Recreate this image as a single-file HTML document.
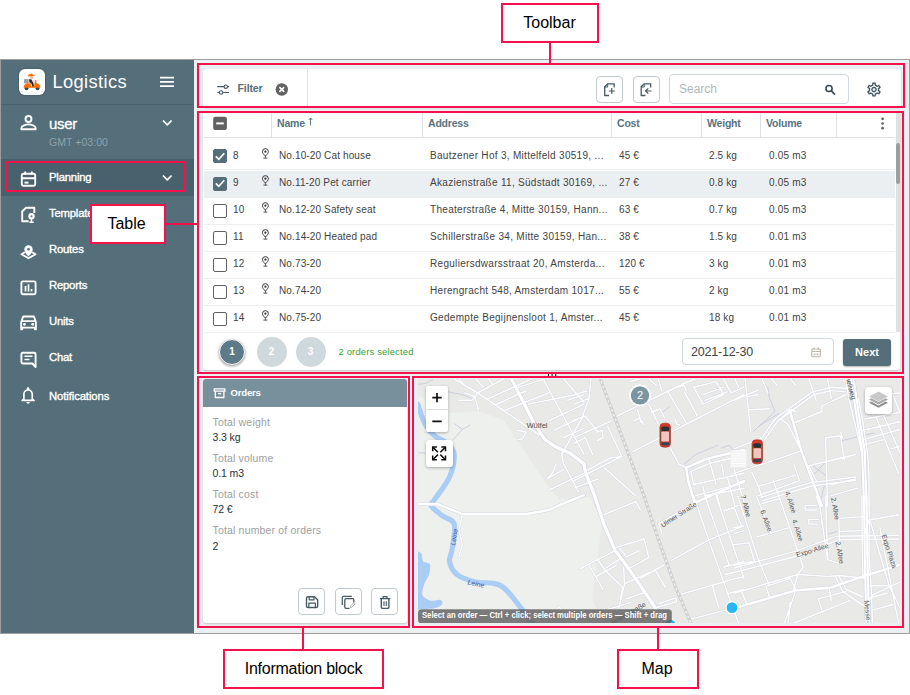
<!DOCTYPE html>
<html><head><meta charset="utf-8">
<style>
*{box-sizing:border-box;margin:0;padding:0}
html,body{width:910px;height:695px;background:#fff;overflow:hidden}
body{position:relative;font-family:"Liberation Sans",sans-serif;color:#263238}
.abs{position:absolute}
#app{position:absolute;left:0;top:59px;width:910px;height:575px;background:#eceff1;border:1px solid #9e9e9e;overflow:hidden}
#side{position:absolute;left:1px;top:60px;width:193px;height:573px;background:#546e7a}
.red{position:absolute;border:2px solid #f4114c;pointer-events:none}
.call{position:absolute;border:2px solid #f4114c;background:#fff;font-size:16px;color:#000;text-align:center}
.line{position:absolute;background:#f4114c}
.nav{position:absolute;left:49px;color:#fff;font-size:11.3px;letter-spacing:-0.2px;-webkit-text-stroke:0.35px #fff;margin-top:0}
.card{position:absolute;background:#fff;border-radius:3px;box-shadow:0 1px 2px rgba(0,0,0,.18)}
.th{position:absolute;top:116.500px;font-size:10.5px;font-weight:bold;color:#587380;letter-spacing:-0.2px}
.sep{position:absolute;top:113px;width:1px;height:24px;background:#e0e0e0}
.row{position:absolute;left:204px;width:691px;height:27px;border-bottom:1px solid #eceff1;font-size:10px;color:#424242;letter-spacing:0.13px}
.row span{position:absolute;top:6.500px;white-space:nowrap}
.cb{position:absolute;left:9px;top:6px;width:14px;height:14px;border:1.5px solid #616161;border-radius:2px;background:#fff}
.pin{position:absolute;left:57.200px;top:4.500px}
.cb.on{background:#546e7a;border-color:#546e7a}
.lbl{position:absolute;left:212.500px;font-size:10.5px;color:#9e9e9e;letter-spacing:0.17px;margin-top:-0.500px}
.val{position:absolute;left:212.500px;font-size:10.5px;color:#263238;letter-spacing:-0.1px}
.btn{position:absolute;width:27px;height:27px;border:1px solid #c0cacf;border-radius:4px;background:#fff}
</style></head><body>

<div id="app"></div>
<div id="side"></div>

<!-- SIDEBAR -->
<div class="abs" style="left:1px;top:104px;width:193px;height:1px;background:#4b636e"></div>
<div class="abs" style="left:19px;top:69px;width:26px;height:26px;border-radius:6px;background:#fff;box-shadow:0 0 2px rgba(0,0,0,.35)"></div>
<svg class="abs" style="left:15px;top:65px" width="35" height="35" viewBox="15 65 35 35">
<circle cx="26.500" cy="88.300" r="1.900" fill="#37474f"/><circle cx="37.600" cy="88.300" r="1.900" fill="#37474f"/>
<path d="M23.600 87.800c0-2.600 1.800-4.600 4.600-4.600h2.600v3h3.300l1-6.200 1.200.3.300 3c2.200.4 3.800 2.200 3.800 4.500z" fill="#ff6d00"/>
<rect x="24.100" y="79.100" width="4.600" height="4.300" fill="#9e9e9e"/>
<path d="M29 79.200h2.300l2.300 4 .3 3.200h-1.800l-.5-2.600-2.300-1.500z" fill="#263238"/>
<path d="M32.300 80.300l3.200.4v.9l-3.200-.2z" fill="#f8bbd0"/>
<circle cx="31.700" cy="77.500" r="1.500" fill="#f6b6a8"/>
<path d="M28 76.300c0-1.600 1.300-2.500 2.800-2.500 1.300 0 2.300.6 2.700 1.400l1.400.2-.3.700-6.400.5z" fill="#ff6d00"/>
</svg>
<div class="abs" style="left:52.400px;top:71px;font-size:18.3px;color:#fff;letter-spacing:0.4px">Logistics</div>
<div class="abs" style="left:49px;top:114.500px;font-size:15px;color:#fff;letter-spacing:-0.35px;-webkit-text-stroke:0.3px #fff">user</div>
<div class="abs" style="left:49px;top:136px;font-size:10.5px;color:#8fa3ad;letter-spacing:0.05px">GMT +03:00</div>
<div class="abs" style="left:1px;top:159px;width:193px;height:37px;background:#49616d"></div>
<div class="nav" style="top:171px">Planning</div>
<div class="nav" style="top:207px">Templates</div>
<div class="nav" style="top:243px">Routes</div>
<div class="nav" style="top:279px">Reports</div>
<div class="nav" style="top:315px">Units</div>
<div class="nav" style="top:351px">Chat</div>
<div class="nav" style="top:390px;letter-spacing:-0.1px">Notifications</div>

<!-- SIDEBAR ICONS -->
<svg class="abs" style="left:0;top:0" width="200" height="695" viewBox="0 0 200 695" fill="none" stroke="#fff" stroke-width="1.9" stroke-linejoin="round">
<!-- hamburger -->
<path d="M160 77.700h14M160 81.900h14M160 86.100h14" stroke-width="1.800"/>
<!-- chevrons -->
<path d="M163 120.5l4.3 4.3 4.3-4.3M163 175.5l4.3 4.3 4.3-4.3" stroke-width="1.7"/>
<!-- user -->
<circle cx="28.5" cy="119" r="3"/>
<path d="M21.4 129.2v-1.3c0-2.300 4.600-3.500 7.100-3.500s7.100 1.200 7.100 3.500v1.300z"/>
<!-- planning calendar -->
<rect x="21.8" y="173.800" width="13.400" height="12" rx="1.800"/>
<path d="M25.200 171.500v3M31.800 171.500v3M22 178.200h13" />
<path d="M24.500 182.600h4" stroke-width="2"/>
<!-- templates -->
<path d="M34.300 213v-5.300h-8.300l-3.800 3.800v9.700h6.500"/>
<circle cx="31.500" cy="216.300" r="2.600" fill="#fff" stroke-width="1.2"/><circle cx="31.500" cy="216.300" r="1" fill="#546e7a" stroke="none"/>
<path d="M31.500 218.600v3M29.300 222.200h4.400" stroke-width="1.500"/>
<!-- routes -->
<path d="M28.500 255.500c-2.400-2.500-3.600-4.400-3.600-6.100a3.600 3.600 0 0 1 7.200 0c0 1.700-1.200 3.600-3.600 6.100z" fill="#fff" stroke-width="1.2"/>
<circle cx="28.500" cy="249.200" r="1.300" fill="#546e7a" stroke="none"/>
<path d="M24.800 252.300l-3.300 1.900 7 4.100 7-4.100-3.300-1.900"/>
<!-- reports -->
<rect x="21.400" y="281.400" width="14.200" height="12.900" rx="1.500"/>
<path d="M25.500 286v5.500M28.500 284.200v7.300M31.500 289v2.500" stroke-width="1.700"/>
<!-- units car -->
<g transform="translate(17.500 311) scale(0.92)" stroke="none" fill="#fff">
<path d="M18.920 6.010C18.720 5.420 18.160 5 17.500 5h-11c-.66 0-1.210.42-1.420 1.010L3 12v8c0 .55.450 1 1 1h1c.55 0 1-.45 1-1v-1h12v1c0 .55.450 1 1 1h1c.55 0 1-.45 1-1v-8l-2.080-5.990zM6.850 7h10.290l1.080 3.110H5.770L6.850 7zM19 17H5v-5h14v5z"/>
<circle cx="7.500" cy="14.500" r="1.500"/><circle cx="16.500" cy="14.500" r="1.500"/>
</g>
<!-- chat -->
<path d="M35.600 367v-12.800a1.500 1.500 0 0 0-1.500-1.500h-11.200a1.500 1.500 0 0 0-1.500 1.500v7.800a1.500 1.500 0 0 0 1.500 1.500h9.500z"/>
<path d="M24.500 356.300h8M24.500 359.400h5" stroke-width="1.500"/>
<!-- bell -->
<g transform="translate(18 385.200) scale(0.84)" stroke="none" fill="#fff">
<path d="M12 22c1.100 0 2-.9 2-2h-4c0 1.100.9 2 2 2zm6-6v-5c0-3.070-1.630-5.640-4.500-6.320V4c0-.83-.67-1.500-1.500-1.500s-1.500.67-1.500 1.500v.68C7.640 5.360 6 7.920 6 11v5l-2 2v1h16v-1l-2-2zm-2 1H8v-6c0-2.480 1.510-4.500 4-4.500s4 2.020 4 4.500v6z"/>
</g>
</svg>

<!-- TOOLBAR -->
<div class="card" style="left:203px;top:69px;width:698px;height:38px"></div>
<div class="abs" style="left:307px;top:69px;width:1px;height:38px;background:#e0e0e0"></div>
<div class="abs" style="left:237.500px;top:82px;font-size:10.5px;font-weight:bold;color:#546e7a;letter-spacing:-0.1px">Filter</div>
<div class="btn" style="left:596px;top:76px"></div>
<div class="btn" style="left:633px;top:76px"></div>
<div class="abs" style="left:669px;top:74px;width:180px;height:30px;border:1px solid #cfd8dc;border-radius:4px;background:#fff"></div>
<div class="abs" style="left:679px;top:82px;font-size:12px;color:#b0b8bc">Search</div>

<!-- TOOLBAR ICONS -->
<svg class="abs" style="left:200px;top:60px;z-index:5" width="710" height="320" viewBox="200 60 710 320" fill="none" stroke="#455a64" stroke-width="1.300" stroke-linejoin="round">
<!-- filter -->
<path d="M217.300 86.700h6.700M227.700 86.700h1.300M217.300 92.500h1.800M223 92.500h6" stroke-width="1.200"/>
<circle cx="225.800" cy="86.700" r="1.700" stroke-width="1.100"/><circle cx="221.100" cy="92.500" r="1.700" stroke-width="1.100"/>
<!-- close -->
<circle cx="281.800" cy="89.500" r="6.200" fill="#616161" stroke="none"/>
<path d="M279.400 87.100l4.800 4.800M284.200 87.100l-4.800 4.800" stroke="#fff" stroke-width="1.700"/>
<!-- file plus -->
<path d="M614.200 87.500v-3.600h-6.700l-2.800 2.800v8.800h4.300" />
<path d="M607.700 84v3h-3" stroke-width="1"/>
<path d="M611.800 88v6M608.800 91h6" stroke-width="1.200"/>
<!-- file arrow -->
<path d="M650.700 87.500v-3.600h-6.700l-2.800 2.800v8.800h4.300" />
<path d="M644.200 84v3h-3" stroke-width="1"/>
<path d="M651.500 91h-5.800M648.300 88.300l-2.700 2.700 2.700 2.700" stroke-width="1.200"/>
<!-- search -->
<circle cx="829" cy="88.500" r="3.100" stroke="#37474f" stroke-width="1.500"/>
<path d="M831.300 90.900l3.700 3.700" stroke="#37474f" stroke-width="1.600"/>
<!-- gear -->
<g transform="translate(865.600 81.200) scale(0.7)" stroke="none" fill="#455a64"><path d="M19.430 12.980c.04-.32.070-.64.070-.98 0-.34-.03-.66-.07-.98l2.110-1.650c.19-.15.240-.42.120-.64l-2-3.460c-.09-.16-.26-.25-.44-.25-.06 0-.12.010-.17.030l-2.490 1c-.52-.4-1.080-.73-1.690-.98l-.38-2.650C14.460 2.180 14.250 2 14 2h-4c-.25 0-.46.180-.49.420l-.38 2.650c-.61.250-1.170.59-1.690.98l-2.490-1c-.06-.02-.12-.03-.18-.03-.17 0-.34.090-.43.250l-2 3.460c-.13.220-.07.490.12.640l2.110 1.650c-.04.320-.07.650-.07.980 0 .33.030.66.070.98l-2.110 1.650c-.19.150-.24.420-.12.640l2 3.460c.09.160.26.250.44.250.06 0 .12-.01.170-.03l2.490-1c.52.400 1.080.73 1.690.98l.38 2.650c.03.240.24.420.49.420h4c.25 0 .46-.18.490-.42l.38-2.650c.61-.25 1.170-.59 1.690-.98l2.490 1c.06.020.12.030.18.030.17 0 .34-.09.430-.25l2-3.460c.12-.22.070-.49-.12-.64l-2.110-1.650zm-1.980-1.710c.04.310.05.520.05.730 0 .21-.02.430-.05.730l-.14 1.130.89.700 1.080.84-.7 1.210-1.270-.51-1.040-.42-.9.680c-.43.320-.84.560-1.250.73l-1.060.43-.16 1.130-.2 1.350h-1.400l-.19-1.350-.16-1.130-1.060-.43c-.43-.18-.83-.41-1.230-.71l-.91-.7-1.060.43-1.270.51-.7-1.210 1.080-.84.890-.7-.14-1.130c-.03-.31-.05-.54-.05-.74s.02-.43.050-.73l.14-1.130-.89-.7-1.080-.84.700-1.210 1.270.51 1.040.42.900-.68c.43-.32.840-.56 1.250-.73l1.060-.43.160-1.130.2-1.350h1.390l.19 1.350.16 1.130 1.060.43c.43.180.83.410 1.230.71l.91.700 1.060-.43 1.270-.51.700 1.210-1.070.85-.89.700.14 1.130zM12 8c-2.210 0-4 1.790-4 4s1.790 4 4 4 4-1.790 4-4-1.790-4-4-4zm0 6c-1.100 0-2-.9-2-2s.9-2 2-2 2 .9 2 2-.9 2-2 2z"/></g>
<!-- header checkbox -->
<rect x="213.200" y="116.700" width="13.700" height="13.300" rx="2" fill="#616161" stroke="none"/>
<path d="M216.200 123.400h7.600" stroke="#fff" stroke-width="2"/>
<!-- three dots -->
<g fill="#616161" stroke="none"><circle cx="882.600" cy="118.800" r="1.350"/><circle cx="882.600" cy="123.500" r="1.350"/><circle cx="882.600" cy="128.200" r="1.350"/></g>
<!-- calendar -->
<g stroke="#bdb7ad" stroke-width="1.100"><rect x="811.800" y="349" width="8.600" height="7.800" rx="1"/><path d="M814 347.500v2M818.200 347.500v2M812 351.500h8.300" /><path d="M814.700 353v3M817.500 353v3M812.500 354.300h7.500" stroke-width="0.600"/></g>
<!-- sort arrow -->
<path d="M310.500 118v7.500M308.700 120l1.800-2 1.800 2" stroke="#546e7a" stroke-width="0.900"/>
</svg>

<!-- TABLE -->
<div class="card" style="left:203px;top:112px;width:697px;height:258px"></div>
<div class="abs" style="left:895.500px;top:113px;width:5px;height:219px;background:#e0e0e0"></div>
<div class="abs" style="left:896px;top:143px;width:4px;height:41px;background:#9e9e9e;border-radius:2px"></div>
<div class="abs" style="left:204px;top:137px;width:691px;height:1px;background:#e0e0e0"></div>
<div class="sep" style="left:271px"></div><div class="sep" style="left:422px"></div><div class="sep" style="left:611px"></div>
<div class="sep" style="left:701px"></div><div class="sep" style="left:760px"></div><div class="sep" style="left:836px"></div>
<div class="th" style="left:277px">Name</div>
<div class="th" style="left:428px">Address</div>
<div class="th" style="left:617px">Cost</div>
<div class="th" style="left:707px">Weight</div>
<div class="th" style="left:766px">Volume</div>

<div class="row" style="top:143.4px"><i class="cb on"><svg viewBox="0 0 14 14" width="14" height="14" style="position:absolute;left:-1.500px;top:-1.500px"><path d="M2.800 7.300l3 3 5.500-6" fill="none" stroke="#fff" stroke-width="1.700"/></svg></i><span style="left:29px">8</span><svg class="pin" viewBox="0 0 8 10" width="8.800" height="11"><path d="M4 7.300C2.300 5.600 1.300 4.500 1.300 3.300a2.700 2.700 0 0 1 5.400 0C6.700 4.500 5.700 5.600 4 7.300z" fill="none" stroke="#333" stroke-width="0.900"/><circle cx="4" cy="3.300" r="1" fill="#333"/><path d="M2.200 9.200h3.600M4 7.300v1.900" stroke="#424242" stroke-width="0.800" fill="none"/></svg><span style="left:75px">No.10-20 Cat house</span><span style="left:226px;letter-spacing:0.3px">Bautzener Hof 3, Mittelfeld 30519, ...</span><span style="left:415px">45 €</span><span style="left:505px">2.5 kg</span><span style="left:565px;letter-spacing:0.2px">0.05 m3</span></div>
<div class="row" style="top:170.5px;background:#eceff1"><i class="cb on"><svg viewBox="0 0 14 14" width="14" height="14" style="position:absolute;left:-1.500px;top:-1.500px"><path d="M2.800 7.300l3 3 5.500-6" fill="none" stroke="#fff" stroke-width="1.700"/></svg></i><span style="left:29px">9</span><svg class="pin" viewBox="0 0 8 10" width="8.800" height="11"><path d="M4 7.300C2.300 5.600 1.300 4.500 1.300 3.300a2.700 2.700 0 0 1 5.400 0C6.700 4.500 5.700 5.600 4 7.300z" fill="none" stroke="#333" stroke-width="0.900"/><circle cx="4" cy="3.300" r="1" fill="#333"/><path d="M2.200 9.200h3.600M4 7.300v1.900" stroke="#424242" stroke-width="0.800" fill="none"/></svg><span style="left:75px">No.11-20 Pet carrier</span><span style="left:226px;letter-spacing:0.3px">Akazienstraße 11, Südstadt 30169, ...</span><span style="left:415px">27 €</span><span style="left:505px">0.8 kg</span><span style="left:565px;letter-spacing:0.2px">0.05 m3</span></div>
<div class="row" style="top:197.6px"><i class="cb"></i><span style="left:29px">10</span><svg class="pin" viewBox="0 0 8 10" width="8.800" height="11"><path d="M4 7.300C2.300 5.600 1.300 4.500 1.300 3.300a2.700 2.700 0 0 1 5.400 0C6.700 4.500 5.700 5.600 4 7.300z" fill="none" stroke="#333" stroke-width="0.900"/><circle cx="4" cy="3.300" r="1" fill="#333"/><path d="M2.200 9.200h3.600M4 7.300v1.900" stroke="#424242" stroke-width="0.800" fill="none"/></svg><span style="left:75px">No.12-20 Safety seat</span><span style="left:226px;letter-spacing:0.3px">Theaterstraße 4, Mitte 30159, Hann...</span><span style="left:415px">63 €</span><span style="left:505px">0.7 kg</span><span style="left:565px;letter-spacing:0.2px">0.05 m3</span></div>
<div class="row" style="top:224.6px"><i class="cb"></i><span style="left:29px">11</span><svg class="pin" viewBox="0 0 8 10" width="8.800" height="11"><path d="M4 7.300C2.300 5.600 1.300 4.500 1.300 3.300a2.700 2.700 0 0 1 5.400 0C6.700 4.500 5.700 5.600 4 7.300z" fill="none" stroke="#333" stroke-width="0.900"/><circle cx="4" cy="3.300" r="1" fill="#333"/><path d="M2.200 9.200h3.600M4 7.300v1.900" stroke="#424242" stroke-width="0.800" fill="none"/></svg><span style="left:75px">No.14-20 Heated pad</span><span style="left:226px;letter-spacing:0.3px">Schillerstraße 34, Mitte 30159, Han...</span><span style="left:415px">38 €</span><span style="left:505px">1.5 kg</span><span style="left:565px;letter-spacing:0.2px">0.01 m3</span></div>
<div class="row" style="top:251.7px"><i class="cb"></i><span style="left:29px">12</span><svg class="pin" viewBox="0 0 8 10" width="8.800" height="11"><path d="M4 7.300C2.300 5.600 1.300 4.500 1.300 3.300a2.700 2.700 0 0 1 5.400 0C6.700 4.500 5.700 5.600 4 7.300z" fill="none" stroke="#333" stroke-width="0.900"/><circle cx="4" cy="3.300" r="1" fill="#333"/><path d="M2.200 9.200h3.600M4 7.300v1.900" stroke="#424242" stroke-width="0.800" fill="none"/></svg><span style="left:75px">No.73-20</span><span style="left:226px;letter-spacing:0.3px">Reguliersdwarsstraat 20, Amsterda...</span><span style="left:415px">120 €</span><span style="left:505px">3 kg</span><span style="left:565px;letter-spacing:0.2px">0.01 m3</span></div>
<div class="row" style="top:278.8px"><i class="cb"></i><span style="left:29px">13</span><svg class="pin" viewBox="0 0 8 10" width="8.800" height="11"><path d="M4 7.300C2.300 5.600 1.300 4.500 1.300 3.300a2.700 2.700 0 0 1 5.400 0C6.700 4.500 5.700 5.600 4 7.300z" fill="none" stroke="#333" stroke-width="0.900"/><circle cx="4" cy="3.300" r="1" fill="#333"/><path d="M2.200 9.200h3.600M4 7.300v1.900" stroke="#424242" stroke-width="0.800" fill="none"/></svg><span style="left:75px">No.74-20</span><span style="left:226px;letter-spacing:0.3px">Herengracht 548, Amsterdam 1017...</span><span style="left:415px">55 €</span><span style="left:505px">2 kg</span><span style="left:565px;letter-spacing:0.2px">0.01 m3</span></div>
<div class="row" style="top:305.9px"><i class="cb"></i><span style="left:29px">14</span><svg class="pin" viewBox="0 0 8 10" width="8.800" height="11"><path d="M4 7.300C2.300 5.600 1.300 4.500 1.300 3.300a2.700 2.700 0 0 1 5.400 0C6.700 4.500 5.700 5.600 4 7.300z" fill="none" stroke="#333" stroke-width="0.900"/><circle cx="4" cy="3.300" r="1" fill="#333"/><path d="M2.200 9.200h3.600M4 7.300v1.900" stroke="#424242" stroke-width="0.800" fill="none"/></svg><span style="left:75px">No.75-20</span><span style="left:226px;letter-spacing:0.3px">Gedempte Begijnensloot 1, Amster...</span><span style="left:415px">45 €</span><span style="left:505px">18 kg</span><span style="left:565px;letter-spacing:0.2px">0.01 m3</span></div>

<!-- pagination -->
<div class="abs" style="left:219px;top:339px;width:26px;height:26px;border-radius:50%;background:#5d7a88;border:1.500px solid #fff;color:#fff;font-size:10px;font-weight:bold;text-align:center;line-height:23px;box-shadow:0 1px 3px rgba(0,0,0,.45)">1</div>
<div class="abs" style="left:256.500px;top:337px;width:30px;height:30px;border-radius:50%;background:#cfd8dc;color:#fff;font-size:10px;font-weight:bold;text-align:center;line-height:30px">2</div>
<div class="abs" style="left:295.500px;top:337px;width:30px;height:30px;border-radius:50%;background:#cfd8dc;color:#fff;font-size:10px;font-weight:bold;text-align:center;line-height:30px">3</div>
<div class="abs" style="left:338.500px;top:346px;font-size:9.5px;color:#3aa03a;letter-spacing:0.13px">2 orders selected</div>
<div class="abs" style="left:682px;top:338px;width:152px;height:27px;border:1px solid #cfd8dc;border-radius:4px;background:#fff"></div>
<div class="abs" style="left:691px;top:345px;font-size:12.5px;color:#424242;letter-spacing:-0.2px">2021-12-30</div>
<div class="abs" style="left:843px;top:339px;width:48px;height:27px;border-radius:3px;background:#546e7a;color:#fff;font-size:11px;font-weight:bold;text-align:center;line-height:27px;box-shadow:0 1px 2px rgba(0,0,0,.3)">Next</div>

<!-- INFO BLOCK -->
<div class="card" style="left:203px;top:379px;width:204px;height:243.500px"></div>
<div class="abs" style="left:203px;top:379px;width:204px;height:28px;background:#78909c;border-radius:3px 3px 0 0"></div>
<div class="abs" style="left:230.500px;top:386.500px;font-size:9.5px;font-weight:bold;color:#fff;letter-spacing:-0.15px">Orders</div>
<div class="lbl" style="top:416px">Total weight</div><div class="val" style="top:431px">3.3 kg</div>
<div class="lbl" style="top:452px">Total volume</div><div class="val" style="top:467px">0.1 m3</div>
<div class="lbl" style="top:488px">Total cost</div><div class="val" style="top:503px">72 €</div>
<div class="lbl" style="top:524px">Total number of orders</div><div class="val" style="top:540px">2</div>
<div class="btn" style="left:298px;top:588px"></div>
<div class="btn" style="left:334.500px;top:588px"></div>
<div class="btn" style="left:371px;top:588px"></div>

<!-- INFO ICONS -->
<svg class="abs" style="left:200px;top:380px;z-index:5" width="215" height="250" viewBox="200 380 215 250" fill="none" stroke="#455a64" stroke-width="1.300" stroke-linejoin="round">
<!-- archive -->
<g stroke="#fff" stroke-width="1.300"><rect x="214.300" y="388.800" width="10.600" height="2.400"/><path d="M215.300 391.300v6.200h8.600v-6.200"/><path d="M218 393.600h3.200" stroke-width="1.400"/></g>
<!-- save -->
<path d="M306.500 598.300a1.600 1.600 0 0 1 1.600-1.600h6.400l3.200 3.200v6a1.600 1.600 0 0 1-1.600 1.600h-8a1.600 1.600 0 0 1-1.600-1.600z" stroke-width="1.400"/>
<path d="M309.200 596.800v3h4.800v-3M308.800 607.400v-4.200h6.600v4.200" stroke-width="1.200"/>
<!-- copy -->
<path d="M342.300 605v-7.400a1.200 1.200 0 0 1 1.200-1.200h8.300" stroke-width="1.200"/>
<path d="M349.500 608.300h-3.500a1.200 1.200 0 0 1-1.200-1.200v-7.200a1.200 1.200 0 0 1 1.200-1.200h6.600a1.200 1.200 0 0 1 1.200 1.200v2.600" stroke-width="1.300"/>
<path d="M350.300 607.500l.4-1.700 3.200-3.200 1.300 1.300-3.200 3.200z" stroke="#9e9e9e" stroke-width="0.800"/>
<!-- trash -->
<path d="M379.800 598.600h10.600M383.200 598.400v-1.700h3.800v1.700" stroke-width="1.300"/>
<path d="M381.300 599v7.900a1.500 1.500 0 0 0 1.500 1.500h4.600a1.500 1.500 0 0 0 1.500-1.500v-7.900" stroke-width="1.400"/>
<path d="M384 601.300v4.800M386.300 601.300v4.800" stroke-width="1.100"/>
</svg>

<!-- MAP -->
<svg class="abs" id="map" style="left:418px;top:379px" width="481.500" height="244.300" viewBox="418 379 481.500 244.300" font-family="Liberation Sans, sans-serif">
<rect x="418" y="379" width="483" height="244" fill="#e9eae8"/>
<path d="M418 395 L450 413 L480 411 L504 421 L549 488 L560 500 L590 497 L602 522 L597 560 L592 600 L604 623 L418 623Z" fill="#eef0ed"/>
<path d="M417.7 404.1 C419.0 407.5 422.4 419.3 425.2 424.6 C428.0 429.9 430.8 432.7 434.6 435.8 C438.3 439.0 444.4 440.2 447.7 443.3 C450.9 446.4 453.9 448.9 454.2 454.5 C454.5 460.2 452.8 469.5 449.5 477.0 C446.3 484.5 437.7 494.7 434.6 499.4 C431.5 504.2 429.6 502.7 430.8 505.4 C432.1 508.1 438.2 512.5 442.1 515.6 C445.9 518.8 452.5 518.6 454.2 524.1 C455.9 529.5 453.1 542.1 452.3 548.4 C451.6 554.6 448.8 557.1 449.5 561.5 C450.3 565.8 452.7 571.1 457.0 574.5 C461.4 578.0 469.5 580.5 475.7 582.0 C482.0 583.5 489.1 582.0 494.4 583.5 C499.7 585.1 501.0 584.5 507.5 591.4 C514.1 598.3 529.3 619.4 533.7 625.0" fill="none" stroke="#a9cdf5" stroke-width="5.200" stroke-linecap="round"/>
<path d="M417.7 551.2 C418.4 551.6 420.5 552.3 421.5 554.0 C422.4 555.7 421.9 559.7 423.4 561.5 C424.8 563.2 429.0 562.1 429.9 564.3 C430.8 566.4 429.9 571.3 429.0 574.5 C428.0 577.8 425.4 580.5 424.3 583.9 C423.2 587.3 421.3 592.3 422.4 595.1 C423.5 597.9 427.9 600.0 430.8 600.7 C433.8 601.5 438.3 599.2 440.2 599.8 C442.1 600.4 443.0 603.1 442.1 604.5 C441.1 605.9 438.0 607.4 434.6 608.2 C431.1 609.0 424.3 608.8 421.5 609.1 C418.7 609.5 418.4 609.9 417.7 610.1Z" fill="#a9cdf5"/>
<g fill="none" stroke-linecap="round" stroke-linejoin="round">
<path d="M454.2 423.7 L462.6 429.3 L470.1 425.0 M462.6 429.3 L453.3 439.6 M417.7 384.4 L425.2 383.5 L432.7 379.7 M448.6 391.9 L462.6 394.7 L473.8 399.4 M417.7 452.7 L425.2 453.1 M661.0 413.4 L669.4 406.9 M684.3 463.9 L695.6 454.5 L718.0 445.2 M721.7 448.0 L729.2 445.2 L733.0 449.9 M767.7 387.2 L769.5 398.4 L775.1 411.5 L752.7 432.1 M758.3 426.5 L778.9 413.4 M810.7 463.9 L827.5 477.0 M810.7 477.9 L827.5 460.2 M842.5 440.5 L874.3 433.0 M825.6 480.7 L821.9 495.7 L818.2 506.0 M823.8 535.3 L836.9 531.5" stroke="#c3c7dc" stroke-width="0.8"/>
<path d="M454.2 378.8 L477.6 392.8 L503.8 410.6 L518.7 420.9 L539.3 434.9 M477.6 392.8 L503.8 378.8 M486.9 399.4 L530.0 379.7 M495.4 405.0 L518.7 393.8 L526.2 391.0 M503.8 410.6 L548.7 392.8 M528.1 404.1 L574.8 394.7 M518.7 387.2 L544.9 378.8 M543.0 378.8 L573.0 434.0 L584.0 454.5 M548.7 420.9 L584.0 404.1 M554.3 430.2 L584.0 416.2 M563.6 437.7 L584.0 428.4 M573.0 434.0 L561.7 454.5 L563.6 463.9 L578.6 492.0 M548.7 477.9 L563.6 469.5 M548.7 490.1 L584.0 473.3 M556.1 463.9 L552.4 473.3 L547.7 477.9 M517.8 430.2 L526.2 432.1 L522.5 438.7 L517.8 439.6 M474.8 396.6 L478.5 409.7 M458.9 400.3 L472.0 400.3 L474.8 396.6 M464.5 392.8 L474.8 396.6 L477.6 392.8 M458.9 378.8 L464.5 385.4 M475.7 378.8 L483.2 387.2 M488.8 378.8 L492.5 384.4 M567.4 400.3 L584.0 394.7 M563.6 378.8 L584.0 402.2 M462.6 514.1 L458.9 529.7 L462.3 544.6 L458.9 556.8 M558.0 606.3 L574.8 623.2 M580.4 568.9 L584.0 567.1 M590.8 378.8 L589.0 398.4 L581.5 419.0 L574.0 432.1 M574.0 404.1 L589.0 398.4 M574.0 437.7 L611.4 420.9 M574.0 419.9 L585.2 416.2 L598.3 432.1 M607.7 426.5 L621.7 456.4 L574.0 480.7 M596.4 432.1 L602.1 430.2 L603.0 437.7 L597.4 440.5 M574.0 394.7 L587.1 391.0 M585.2 471.4 L609.5 458.3 L621.7 456.4 M603.9 467.6 L635.7 495.7 M574.0 488.2 L598.3 478.9 M574.0 443.3 L585.2 437.7 L592.7 454.5 M617.0 416.2 L635.7 406.9 L686.2 382.5 L695.6 378.8 M633.8 420.9 L639.5 418.1 L644.1 424.6 M637.6 409.7 L641.3 422.8 M648.8 404.1 L658.2 423.7 M651.6 412.5 L660.0 408.7 L664.7 418.1 M632.9 451.7 L744.0 394.7 M667.5 391.0 L686.2 422.8 M684.3 391.9 L697.4 416.2 M693.7 387.2 L703.0 404.1 L723.6 394.7 L716.1 381.6 L693.7 387.2 M704.9 400.3 L727.4 391.9 M703.0 394.7 L723.6 387.2 M678.7 387.2 L684.3 385.4 L686.2 391.0 M630.1 381.6 L639.5 378.8 M648.8 378.8 L656.3 385.4 M658.2 378.8 L661.9 391.0 M723.6 378.8 L731.1 392.8 L744.0 387.2 M734.8 378.8 L738.6 387.2 M670.3 448.0 L678.7 463.9 L686.2 467.6 M690.9 471.4 L710.5 463.0 L744.0 455.5 M690.9 471.4 L693.7 484.5 M693.7 484.5 L727.4 477.0 L744.0 473.3 M703.0 486.3 L704.9 495.7 L744.0 488.2 M708.7 458.3 L716.1 484.5 M721.7 463.9 L723.6 475.1 M695.6 495.7 L744.0 482.6 M704.9 495.7 L708.7 506.0 M716.1 492.0 L719.9 506.0 M727.4 477.0 L734.8 506.0 M675.0 419.0 L676.9 424.6 L679.7 425.0 M603.9 514.7 L635.7 501.6 L640.4 510.0 M616.1 547.4 L644.1 539.0 L648.8 557.7 L630.1 568.0 M619.8 548.4 L626.4 556.8 L640.4 550.2 M581.5 568.0 L614.2 551.2 M589.0 565.2 L603.0 589.5 M598.3 560.5 L604.9 569.9 L622.6 587.6 L618.9 608.2 M596.4 576.4 L617.0 565.2 M605.8 568.0 L618.9 559.6 M623.6 567.1 L624.5 583.9 L618.9 608.2 M624.5 583.9 L648.8 572.7 M640.4 578.3 L663.8 565.2 M654.4 568.9 L665.6 587.6 M626.4 598.9 L645.1 592.3 M659.1 603.5 L675.9 597.9 L676.5 601.7 L657.2 607.3 M605.8 610.1 L630.1 602.6 M659.1 524.1 L661.9 533.4 M671.3 560.5 L708.7 539.9 L744.0 525.9 M681.5 594.2 L723.6 582.0 L744.0 576.4 M690.0 619.4 L744.0 605.4 M693.7 496.0 L708.7 539.9 L723.6 582.0 L733.0 608.2 L738.6 623.2 M704.9 496.0 L729.2 565.2 L723.6 567.1 M716.1 496.0 L744.0 578.3 M712.4 585.8 L718.9 608.2 M723.6 567.1 L744.0 561.5 M725.5 574.5 L744.0 569.9 M729.2 593.3 L744.0 589.5 M723.6 511.0 L738.6 505.4 M734.8 533.4 L744.0 530.6 M845.8 378.8 L848.5 396.6 L853.7 419.0 L858.9 439.6 L861.9 454.5 M858.4 398.4 L863.0 422.8 L867.2 450.8 L869.0 473.3 L869.0 506.0 M762.1 437.7 L775.1 419.0 L790.1 407.8 L812.5 391.9 L831.3 387.2 L846.2 388.2 M763.9 440.5 L777.9 420.9 L792.0 410.6 L813.5 394.7 L831.3 390.6 L846.2 391.9 M734.0 448.9 L762.1 437.7 M734.0 400.3 L758.3 390.0 M745.2 378.8 L747.1 398.4 L750.8 432.1 M747.1 396.6 L758.3 394.7 M749.0 409.7 L769.5 408.7 M780.8 419.0 L790.1 409.7 L795.7 411.5 M780.8 419.0 L788.2 424.6 L799.5 447.1 M793.8 422.8 L821.9 411.5 L821.9 405.9 L846.2 394.7 M734.0 473.3 L771.4 461.1 L801.3 450.8 M825.6 437.7 L827.5 506.0 M825.6 437.7 L840.6 435.8 L844.3 460.2 M840.6 432.1 L842.5 437.7 M808.8 465.8 L855.6 454.5 M808.8 465.8 L816.3 480.7 M751.8 472.3 L758.3 486.3 L795.7 475.1 M758.3 486.3 L762.1 497.6 M793.8 463.9 L799.5 480.7 L758.3 495.7 M760.2 497.6 L810.7 482.6 L855.6 477.0 M762.1 500.9 L811.6 486.0 L855.6 480.4 M831.3 484.5 L855.6 478.9 M831.3 495.7 L857.4 488.2 M773.3 480.7 L778.9 495.7 M863.0 439.6 L904.0 428.4 M863.0 445.2 L883.6 439.6 M864.9 419.0 L904.0 411.5 M876.1 417.1 L889.2 450.8 L898.6 473.3 M883.6 415.3 L904.0 462.0 M734.0 468.6 L737.7 480.7 L745.2 506.0 M864.9 394.7 L904.0 392.8 M893.0 394.7 L904.0 422.8 M863.0 430.2 L904.0 420.9 M891.1 448.9 L904.0 445.2 M808.8 378.8 L816.3 400.3 M827.5 378.8 L831.3 398.4 M762.1 378.8 L767.7 392.8 M771.4 378.8 L777.0 385.4 M790.1 378.8 L795.7 385.4 M869.0 496.0 L869.4 520.3 L869.0 552.1 L871.5 593.3 L872.4 623.2 M861.9 496.0 L862.3 552.1 L863.0 576.4 M734.0 568.0 L795.7 551.2 L836.9 536.2 L898.6 535.3 M734.0 572.7 L799.5 555.5 L838.7 539.9 L898.6 539.0 M734.0 593.3 L797.6 574.5 L827.5 576.4 L838.7 575.5 L864.9 578.3 M797.6 574.5 L793.8 589.5 M795.7 590.4 L784.5 623.2 M790.1 602.6 L788.2 623.2 M793.8 623.2 L850.0 600.7 M818.2 598.9 L821.9 610.1 M818.2 598.9 L846.2 591.4 M829.4 589.5 L831.3 600.7 M835.0 575.5 L842.5 591.4 L853.7 598.9 L864.9 606.3 M864.9 606.3 L872.4 595.1 L904.0 580.2 M838.7 575.5 L846.2 589.5 L863.0 597.0 M868.7 520.3 L898.6 514.7 M868.7 520.3 L864.9 533.4 M879.9 527.8 L898.6 623.2 M870.5 522.2 L889.2 585.8 L904.0 615.7 M870.5 585.8 L889.2 585.8 M872.4 597.0 L887.4 593.3 M872.4 610.1 L893.0 604.5 M737.7 496.0 L758.3 559.6 L769.5 585.8 M756.4 496.0 L771.4 533.4 M778.9 496.0 L803.2 567.1 L797.6 574.5 M825.6 496.0 L827.5 559.6 L838.7 563.3 L840.6 561.5 M838.7 518.4 L840.6 561.5 M756.4 537.1 L788.2 527.8 M734.0 544.6 L749.0 542.8 L754.6 561.5 M734.0 565.2 L752.7 561.5 M767.7 585.8 L790.1 578.3 L795.7 589.5 M741.5 591.4 L747.1 604.5 M765.8 585.8 L769.5 597.0 M816.3 505.4 L805.1 505.4 L805.1 510.0 L816.3 510.0 M818.2 519.4 L808.8 519.4 L808.8 524.1 L818.2 524.1 M816.3 496.0 L820.0 507.2 L827.5 559.6 M762.1 503.5 L778.9 498.8 M734.0 527.8 L743.4 525.9 M734.0 507.2 L741.5 525.9 M838.7 518.4 L864.9 516.6 M838.7 531.5 L863.0 530.6" stroke="#d6d8e2" stroke-width="2.3"/>
<path d="M850.9 378.8 L853.9 398.4 L857.6 422.8 L862.1 450.8 L864.0 506.0 M853.5 378.8 L856.5 398.4 L860.2 422.8 L864.7 450.8 L866.6 506.0 M864.0 496.0 L864.7 552.1 L865.8 600.7 L866.4 623.2 M866.6 496.0 L867.3 552.1 L868.5 600.7 L869.0 623.2" stroke="#c9ccd8" stroke-width="3.2"/>
<path d="M417.7 503.9 L438.3 504.4 L462.6 514.1 L526.2 514.1 L548.7 510.0 L563.6 503.5 L584.0 495.1 M686.2 467.6 L708.7 458.3 L744.0 449.9 M686.2 467.6 L688.1 480.7 L695.6 506.0 M659.1 524.1 L697.4 501.6 L744.0 481.0 M790.1 411.5 L801.3 450.8 L812.5 480.7 L821.9 506.0 M734.0 608.2 L795.7 590.4 L831.3 587.6 L863.0 576.4 L898.6 565.2" stroke="#d0d2de" stroke-width="3.6"/>
<path d="M511.3 378.8 L522.5 400.3 L533.7 422.8 L544.9 439.6 L556.1 447.1 L569.2 452.7 L584.0 463.9 L585.2 471.4 L594.6 495.7 L603.9 524.1 L615.1 550.2 L630.1 570.8 L654.4 606.3 L661.9 623.2" stroke="#d0d2de" stroke-width="4.6"/>
<path d="M454.2 378.8 L477.6 392.8 L503.8 410.6 L518.7 420.9 L539.3 434.9 M477.6 392.8 L503.8 378.8 M486.9 399.4 L530.0 379.7 M495.4 405.0 L518.7 393.8 L526.2 391.0 M503.8 410.6 L548.7 392.8 M528.1 404.1 L574.8 394.7 M518.7 387.2 L544.9 378.8 M543.0 378.8 L573.0 434.0 L584.0 454.5 M548.7 420.9 L584.0 404.1 M554.3 430.2 L584.0 416.2 M563.6 437.7 L584.0 428.4 M573.0 434.0 L561.7 454.5 L563.6 463.9 L578.6 492.0 M548.7 477.9 L563.6 469.5 M548.7 490.1 L584.0 473.3 M556.1 463.9 L552.4 473.3 L547.7 477.9 M517.8 430.2 L526.2 432.1 L522.5 438.7 L517.8 439.6 M474.8 396.6 L478.5 409.7 M458.9 400.3 L472.0 400.3 L474.8 396.6 M464.5 392.8 L474.8 396.6 L477.6 392.8 M458.9 378.8 L464.5 385.4 M475.7 378.8 L483.2 387.2 M488.8 378.8 L492.5 384.4 M567.4 400.3 L584.0 394.7 M563.6 378.8 L584.0 402.2 M462.6 514.1 L458.9 529.7 L462.3 544.6 L458.9 556.8 M558.0 606.3 L574.8 623.2 M580.4 568.9 L584.0 567.1 M590.8 378.8 L589.0 398.4 L581.5 419.0 L574.0 432.1 M574.0 404.1 L589.0 398.4 M574.0 437.7 L611.4 420.9 M574.0 419.9 L585.2 416.2 L598.3 432.1 M607.7 426.5 L621.7 456.4 L574.0 480.7 M596.4 432.1 L602.1 430.2 L603.0 437.7 L597.4 440.5 M574.0 394.7 L587.1 391.0 M585.2 471.4 L609.5 458.3 L621.7 456.4 M603.9 467.6 L635.7 495.7 M574.0 488.2 L598.3 478.9 M574.0 443.3 L585.2 437.7 L592.7 454.5 M617.0 416.2 L635.7 406.9 L686.2 382.5 L695.6 378.8 M633.8 420.9 L639.5 418.1 L644.1 424.6 M637.6 409.7 L641.3 422.8 M648.8 404.1 L658.2 423.7 M651.6 412.5 L660.0 408.7 L664.7 418.1 M632.9 451.7 L744.0 394.7 M667.5 391.0 L686.2 422.8 M684.3 391.9 L697.4 416.2 M693.7 387.2 L703.0 404.1 L723.6 394.7 L716.1 381.6 L693.7 387.2 M704.9 400.3 L727.4 391.9 M703.0 394.7 L723.6 387.2 M678.7 387.2 L684.3 385.4 L686.2 391.0 M630.1 381.6 L639.5 378.8 M648.8 378.8 L656.3 385.4 M658.2 378.8 L661.9 391.0 M723.6 378.8 L731.1 392.8 L744.0 387.2 M734.8 378.8 L738.6 387.2 M670.3 448.0 L678.7 463.9 L686.2 467.6 M690.9 471.4 L710.5 463.0 L744.0 455.5 M690.9 471.4 L693.7 484.5 M693.7 484.5 L727.4 477.0 L744.0 473.3 M703.0 486.3 L704.9 495.7 L744.0 488.2 M708.7 458.3 L716.1 484.5 M721.7 463.9 L723.6 475.1 M695.6 495.7 L744.0 482.6 M704.9 495.7 L708.7 506.0 M716.1 492.0 L719.9 506.0 M727.4 477.0 L734.8 506.0 M675.0 419.0 L676.9 424.6 L679.7 425.0 M603.9 514.7 L635.7 501.6 L640.4 510.0 M616.1 547.4 L644.1 539.0 L648.8 557.7 L630.1 568.0 M619.8 548.4 L626.4 556.8 L640.4 550.2 M581.5 568.0 L614.2 551.2 M589.0 565.2 L603.0 589.5 M598.3 560.5 L604.9 569.9 L622.6 587.6 L618.9 608.2 M596.4 576.4 L617.0 565.2 M605.8 568.0 L618.9 559.6 M623.6 567.1 L624.5 583.9 L618.9 608.2 M624.5 583.9 L648.8 572.7 M640.4 578.3 L663.8 565.2 M654.4 568.9 L665.6 587.6 M626.4 598.9 L645.1 592.3 M659.1 603.5 L675.9 597.9 L676.5 601.7 L657.2 607.3 M605.8 610.1 L630.1 602.6 M659.1 524.1 L661.9 533.4 M671.3 560.5 L708.7 539.9 L744.0 525.9 M681.5 594.2 L723.6 582.0 L744.0 576.4 M690.0 619.4 L744.0 605.4 M693.7 496.0 L708.7 539.9 L723.6 582.0 L733.0 608.2 L738.6 623.2 M704.9 496.0 L729.2 565.2 L723.6 567.1 M716.1 496.0 L744.0 578.3 M712.4 585.8 L718.9 608.2 M723.6 567.1 L744.0 561.5 M725.5 574.5 L744.0 569.9 M729.2 593.3 L744.0 589.5 M723.6 511.0 L738.6 505.4 M734.8 533.4 L744.0 530.6 M845.8 378.8 L848.5 396.6 L853.7 419.0 L858.9 439.6 L861.9 454.5 M858.4 398.4 L863.0 422.8 L867.2 450.8 L869.0 473.3 L869.0 506.0 M762.1 437.7 L775.1 419.0 L790.1 407.8 L812.5 391.9 L831.3 387.2 L846.2 388.2 M763.9 440.5 L777.9 420.9 L792.0 410.6 L813.5 394.7 L831.3 390.6 L846.2 391.9 M734.0 448.9 L762.1 437.7 M734.0 400.3 L758.3 390.0 M745.2 378.8 L747.1 398.4 L750.8 432.1 M747.1 396.6 L758.3 394.7 M749.0 409.7 L769.5 408.7 M780.8 419.0 L790.1 409.7 L795.7 411.5 M780.8 419.0 L788.2 424.6 L799.5 447.1 M793.8 422.8 L821.9 411.5 L821.9 405.9 L846.2 394.7 M734.0 473.3 L771.4 461.1 L801.3 450.8 M825.6 437.7 L827.5 506.0 M825.6 437.7 L840.6 435.8 L844.3 460.2 M840.6 432.1 L842.5 437.7 M808.8 465.8 L855.6 454.5 M808.8 465.8 L816.3 480.7 M751.8 472.3 L758.3 486.3 L795.7 475.1 M758.3 486.3 L762.1 497.6 M793.8 463.9 L799.5 480.7 L758.3 495.7 M760.2 497.6 L810.7 482.6 L855.6 477.0 M762.1 500.9 L811.6 486.0 L855.6 480.4 M831.3 484.5 L855.6 478.9 M831.3 495.7 L857.4 488.2 M773.3 480.7 L778.9 495.7 M863.0 439.6 L904.0 428.4 M863.0 445.2 L883.6 439.6 M864.9 419.0 L904.0 411.5 M876.1 417.1 L889.2 450.8 L898.6 473.3 M883.6 415.3 L904.0 462.0 M734.0 468.6 L737.7 480.7 L745.2 506.0 M864.9 394.7 L904.0 392.8 M893.0 394.7 L904.0 422.8 M863.0 430.2 L904.0 420.9 M891.1 448.9 L904.0 445.2 M808.8 378.8 L816.3 400.3 M827.5 378.8 L831.3 398.4 M762.1 378.8 L767.7 392.8 M771.4 378.8 L777.0 385.4 M790.1 378.8 L795.7 385.4 M869.0 496.0 L869.4 520.3 L869.0 552.1 L871.5 593.3 L872.4 623.2 M861.9 496.0 L862.3 552.1 L863.0 576.4 M734.0 568.0 L795.7 551.2 L836.9 536.2 L898.6 535.3 M734.0 572.7 L799.5 555.5 L838.7 539.9 L898.6 539.0 M734.0 593.3 L797.6 574.5 L827.5 576.4 L838.7 575.5 L864.9 578.3 M797.6 574.5 L793.8 589.5 M795.7 590.4 L784.5 623.2 M790.1 602.6 L788.2 623.2 M793.8 623.2 L850.0 600.7 M818.2 598.9 L821.9 610.1 M818.2 598.9 L846.2 591.4 M829.4 589.5 L831.3 600.7 M835.0 575.5 L842.5 591.4 L853.7 598.9 L864.9 606.3 M864.9 606.3 L872.4 595.1 L904.0 580.2 M838.7 575.5 L846.2 589.5 L863.0 597.0 M868.7 520.3 L898.6 514.7 M868.7 520.3 L864.9 533.4 M879.9 527.8 L898.6 623.2 M870.5 522.2 L889.2 585.8 L904.0 615.7 M870.5 585.8 L889.2 585.8 M872.4 597.0 L887.4 593.3 M872.4 610.1 L893.0 604.5 M737.7 496.0 L758.3 559.6 L769.5 585.8 M756.4 496.0 L771.4 533.4 M778.9 496.0 L803.2 567.1 L797.6 574.5 M825.6 496.0 L827.5 559.6 L838.7 563.3 L840.6 561.5 M838.7 518.4 L840.6 561.5 M756.4 537.1 L788.2 527.8 M734.0 544.6 L749.0 542.8 L754.6 561.5 M734.0 565.2 L752.7 561.5 M767.7 585.8 L790.1 578.3 L795.7 589.5 M741.5 591.4 L747.1 604.5 M765.8 585.8 L769.5 597.0 M816.3 505.4 L805.1 505.4 L805.1 510.0 L816.3 510.0 M818.2 519.4 L808.8 519.4 L808.8 524.1 L818.2 524.1 M816.3 496.0 L820.0 507.2 L827.5 559.6 M762.1 503.5 L778.9 498.8 M734.0 527.8 L743.4 525.9 M734.0 507.2 L741.5 525.9 M838.7 518.4 L864.9 516.6 M838.7 531.5 L863.0 530.6" stroke="#fff" stroke-width="1.4"/>
<path d="M850.9 378.8 L853.9 398.4 L857.6 422.8 L862.1 450.8 L864.0 506.0 M853.5 378.8 L856.5 398.4 L860.2 422.8 L864.7 450.8 L866.6 506.0 M864.0 496.0 L864.7 552.1 L865.8 600.7 L866.4 623.2 M866.6 496.0 L867.3 552.1 L868.5 600.7 L869.0 623.2" stroke="#fff" stroke-width="2.2"/>
<path d="M417.7 503.9 L438.3 504.4 L462.6 514.1 L526.2 514.1 L548.7 510.0 L563.6 503.5 L584.0 495.1 M686.2 467.6 L708.7 458.3 L744.0 449.9 M686.2 467.6 L688.1 480.7 L695.6 506.0 M659.1 524.1 L697.4 501.6 L744.0 481.0 M790.1 411.5 L801.3 450.8 L812.5 480.7 L821.9 506.0 M734.0 608.2 L795.7 590.4 L831.3 587.6 L863.0 576.4 L898.6 565.2" stroke="#fff" stroke-width="2.6"/>
<path d="M511.3 378.8 L522.5 400.3 L533.7 422.8 L544.9 439.6 L556.1 447.1 L569.2 452.7 L584.0 463.9 L585.2 471.4 L594.6 495.7 L603.9 524.1 L615.1 550.2 L630.1 570.8 L654.4 606.3 L661.9 623.2" stroke="#fff" stroke-width="3.4"/>
<path d="M600.2 378.8 L618.9 428.4 L644.1 496.0 L656.3 533.4 L675.0 585.8 L690.9 623.2" stroke="#c6c6c6" stroke-width="3.0"/>
<path d="M600.2 378.8 L618.9 428.4 L644.1 496.0 L656.3 533.4 L675.0 585.8 L690.9 623.2" stroke="#efefef" stroke-width="1.8"/>
<path d="M600.2 378.8 L618.9 428.4 L644.1 496.0 L656.3 533.4 L675.0 585.8 L690.9 623.2" stroke="#cfcfcf" stroke-width="1.8" stroke-dasharray="2.5 2.5" stroke-linecap="butt"/>
</g>
<!-- parking lot -->
<rect x="730.500" y="450.500" width="16" height="17" fill="#f3f3f3"/><g stroke="#fff" stroke-width="0.800"><path d="M731 451h15M731 453.500h15M731 456h15M731 458.500h15M731 461h15M731 463.500h15M731 466h15" /></g>
<g><text transform="translate(537.0 428.2) rotate(0)" font-size="7.6" fill="#505050" text-anchor="middle" >Wülfel</text><text transform="translate(456.5 537.5) rotate(-80)" font-size="6.9" fill="#3f5aa8" text-anchor="middle" font-style="italic">Leine</text><text transform="translate(475.5 586.0) rotate(12)" font-size="6.9" fill="#3f5aa8" text-anchor="middle" font-style="italic">Leine</text><text transform="translate(680.0 516.5) rotate(-33)" font-size="6.9" fill="#505050" text-anchor="middle" >Ulmer Straße</text><text transform="translate(743.5 506.5) rotate(74)" font-size="6.9" fill="#505050" text-anchor="middle" >7. Allee</text><text transform="translate(764.0 521.5) rotate(70)" font-size="6.9" fill="#505050" text-anchor="middle" >6. Allee</text><text transform="translate(788.5 503.0) rotate(72)" font-size="6.9" fill="#505050" text-anchor="middle" >4. Allee</text><text transform="translate(795.5 531.0) rotate(72)" font-size="6.9" fill="#505050" text-anchor="middle" >4. Allee</text><text transform="translate(833.0 509.0) rotate(80)" font-size="6.9" fill="#505050" text-anchor="middle" >2. Allee</text><text transform="translate(837.5 553.0) rotate(80)" font-size="6.9" fill="#505050" text-anchor="middle" >2. Allee</text><text transform="translate(813.0 552.5) rotate(-17)" font-size="6.9" fill="#505050" text-anchor="middle" >Expo-Allee</text><text transform="translate(887.0 552.0) rotate(72)" font-size="6.9" fill="#505050" text-anchor="middle" >Expo Plaza</text><text transform="translate(865.5 614.0) rotate(85)" font-size="6.9" fill="#505050" text-anchor="middle" >Messe-S</text><text transform="translate(847.0 383.0) rotate(75)" font-size="6.9" fill="#505050" text-anchor="middle" >Schnellweg</text><text transform="translate(619.2 621.5) rotate(-30)" font-size="6.9" fill="#505050" text-anchor="middle" >Hildesheimer Straße</text></g>
<defs><g id="car"><rect x="-5.300" y="-12" width="10.600" height="24" rx="4" fill="#d8392b" stroke="#a82a20" stroke-width="0.600"/><path d="M-4.200-7.500c1-1.500 7.400-1.500 8.400 0l-.8 3.500h-6.800z" fill="#263238"/><rect x="-3.900" y="-3.600" width="7.800" height="10" rx="1" fill="#f6c4c0"/><path d="M-3.600 7h7.200l.6 2.600c-1.500 1-6.900 1-8.400 0z" fill="#37474f"/><path d="M-4.600-6v13M4.600-6v13" stroke="#2e7d32" stroke-width="0.500"/></g></defs>
<use href="#car" x="665.200" y="435.200"/>
<use href="#car" x="757.300" y="451.800"/>
<circle cx="640" cy="395.400" r="10" fill="#7b95a2" stroke="#fff" stroke-width="1.600"/>
<text x="640" y="399.300" font-size="11" fill="#fff" text-anchor="middle">2</text>
<circle cx="732" cy="607.600" r="6" fill="#29b6f6" stroke="#fff" stroke-width="1.200"/>
<circle cx="670.300" cy="625" r="6" fill="#29b6f6" stroke="#fff" stroke-width="1.200"/>
<!-- status -->
<rect x="418" y="609.200" width="253.800" height="14.300" rx="3.500" fill="#5c5c5c" fill-opacity="0.800"/>
<text x="422" y="618.300" font-size="8.300" font-weight="bold" fill="#fff" textLength="245" lengthAdjust="spacingAndGlyphs">Select an order — Ctrl + click; select multiple orders — Shift + drag</text>
</svg>
<!-- map controls -->
<div class="abs" style="left:425.500px;top:386px;width:22.500px;height:45.500px;background:#fff;border-radius:2px;box-shadow:0 1px 3px rgba(0,0,0,.3)"></div>
<div class="abs" style="left:425.500px;top:409px;width:23px;height:1px;background:#ddd"></div>
<div class="abs" style="left:425.500px;top:440px;width:27px;height:27px;background:#fff;border-radius:3px;box-shadow:0 1px 3px rgba(0,0,0,.3)"></div>
<div class="abs" style="left:865px;top:386.500px;width:27px;height:27px;background:#fff;border-radius:4px;box-shadow:0 1px 3px rgba(0,0,0,.3)"></div>
<svg class="abs" style="left:418px;top:379px" width="483" height="244" viewBox="418 379 483 244" fill="none" stroke="#111" stroke-linecap="butt">
<path d="M432.300 397.600h9.400M437 392.900v9.400M432.300 421.300h9.400" stroke-width="1.700"/>
<g stroke-width="1.500"><path d="M433.300 447.600l4.600 4.600M444.900 447.600l-4.600 4.600M433.300 459.200l4.600-4.600M444.900 459.200l-4.600-4.600"/><path d="M432.700 451.200v-4.200h4.200M441.300 447h4.200v4.200M432.700 455.600v4.200h4.200M445.500 455.600v4.200h-4.200" stroke-linejoin="miter"/></g>
<g stroke="none"><path d="M878.500 391.500l9.500 5-9.500 5-9.500-5z" fill="#c9c9c9"/><path d="M869 399.500l2.300-1.200 7.200 3.800 7.200-3.800 2.300 1.200-9.500 5z" fill="#a8a8a8"/><path d="M869 402.800l2.300-1.200 7.200 3.800 7.200-3.800 2.300 1.200-9.500 5z" fill="#8f8f8f"/></g>
</svg>

<!-- RED BOXES -->
<div class="red" style="left:6px;top:161px;width:180px;height:31px"></div>
<div class="red" style="left:197px;top:63px;width:708px;height:45px"></div>
<div class="red" style="left:197px;top:111px;width:707px;height:263px"></div>
<div class="red" style="left:197px;top:376px;width:213px;height:252px"></div>
<div class="red" style="left:412px;top:376px;width:492px;height:252px"></div>

<div class="abs" style="left:547.500px;top:374.300px;width:1.600px;height:1.500px;background:#111;box-shadow:3.600px 0 0 #111,7.200px 0 0 #111"></div>
<!-- CALLOUTS -->
<div class="line" style="left:549px;top:42px;width:2px;height:22px"></div>
<div class="call" style="left:501px;top:3px;width:98px;height:40px;line-height:36px;text-indent:-1px">Toolbar</div>
<div class="line" style="left:165px;top:223px;width:33px;height:2px"></div>
<div class="call" style="left:90px;top:204px;width:76px;height:40px;line-height:36px;text-indent:-3px">Table</div>
<div class="line" style="left:302px;top:627px;width:2px;height:24px"></div>
<div class="call" style="left:223px;top:649px;width:161px;height:40px;line-height:36px;letter-spacing:-0.26px">Information block</div>
<div class="line" style="left:657px;top:627px;width:2px;height:24px"></div>
<div class="call" style="left:617px;top:649px;width:82px;height:40px;line-height:36px;text-indent:-2px">Map</div>

</body></html>
